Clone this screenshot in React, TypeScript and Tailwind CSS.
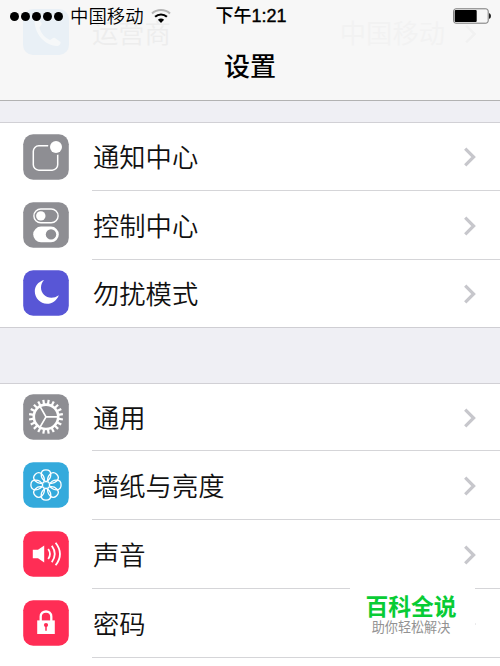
import type { ReactNode } from 'react';

const rotations = (count: number) => Array.from({ length: count }, (_, i) => (i * 360) / count);

function Tile({ color, children }: { color: string; children: ReactNode }) {
  return (
    <svg viewBox="0 0 46 46" className={`mb-[1px] h-[46px] w-[46px] shrink-0 ${color}`} fill="none">
      <rect x="0.2" y="0.2" width="45.6" height="45.6" rx="10" fill="currentColor" />
      {children}
    </svg>
  );
}

function NotificationIcon() {
  return (
    <Tile color="text-[#8e8e93]">
      <rect x="10.3" y="11.8" width="24.4" height="24.4" rx="5.5" stroke="#fff" strokeWidth="1.5" />
      <circle cx="33" cy="13" r="8" fill="currentColor" />
      <circle cx="33" cy="13" r="6" fill="#fff" />
    </Tile>
  );
}

function ControlIcon() {
  return (
    <Tile color="text-[#8e8e93]">
      <rect x="10.9" y="7" width="24.2" height="13.8" rx="6.9" stroke="#fff" strokeWidth="1.4" />
      <circle cx="17.8" cy="13.9" r="4.7" fill="#fff" />
      <rect x="10.2" y="24.6" width="25.6" height="15.6" rx="7.8" fill="#fff" />
      <circle cx="28" cy="32.4" r="5.2" fill="currentColor" />
    </Tile>
  );
}

function MoonIcon() {
  return (
    <Tile color="text-[#5856d6]">
      <path d="M21 10C14.8 12 11.8 16.2 11.8 21.3C11.8 28.2 17.3 33.8 24 33.8C29.4 33.8 33.8 30.5 35.8 25.2C33.4 26.9 31 27.7 28.4 27.7C22.5 27.7 18 23.3 18 17.8C18 14.8 19 12.2 21 10Z" fill="#fff" />
    </Tile>
  );
}

function GearIcon() {
  return (
    <Tile color="text-[#8e8e93]">
      <g stroke="#fff">
        <circle cx="23" cy="22.8" r="12.2" strokeWidth="2.6" />
        {rotations(20).map((a) => (
          <path key={a} d="M23 10.8V5.7" strokeWidth="2.2" transform={`rotate(${a + 9} 23 22.8)`} />
        ))}
        <path d="M23 22.8H35M23 22.8L17 12.4M23 22.8L17 33.2" strokeWidth="1.7" />
      </g>
    </Tile>
  );
}

function FlowerIcon() {
  return (
    <Tile color="text-[#34aadc]">
      <g stroke="#fff" strokeWidth="1.3">
        {rotations(8).map((a) => (
          <path
            key={a}
            d="M23 19.8C20.6 18.6 18.2 15.6 18.2 12.6C18.2 9.8 20.2 7.9 23 7.9C25.8 7.9 27.8 9.8 27.8 12.6C27.8 15.6 25.4 18.6 23 19.8Z"
            transform={`rotate(${a} 23 23)`}
          />
        ))}
      </g>
    </Tile>
  );
}

function SoundIcon() {
  return (
    <Tile color="text-[#ff2d55]">
      <path d="M9.8 18.7H15L21.2 14.4V31.5L15 27.3H9.8Z" fill="#fff" />
      <path d="M25.2 18C27.5 21.2 27.5 24.8 25.2 28M28.8 14.8C32.7 20.2 32.7 25.8 28.8 31.2M32.6 11.7C38.4 19.2 38.4 26.8 32.6 34.3" stroke="#fff" strokeWidth="1.8" />
    </Tile>
  );
}

function LockIcon() {
  return (
    <Tile color="text-[#ff2d55]">
      <path d="M17.7 21V16.5C17.7 9.8 28.3 9.8 28.3 16.5V21" stroke="#fff" strokeWidth="2.3" />
      <path d="M14.2 20.4H31.8V34H14.2Z" fill="#fff" />
      <circle cx="23" cy="25" r="2.1" fill="currentColor" />
      <path d="M23 25V30.8" stroke="currentColor" strokeWidth="1.5" />
    </Tile>
  );
}

function Chevron() {
  return (
    <svg viewBox="0 0 14 22" className="mt-px mr-[23px] ml-auto h-[22px] w-[14px] text-[#c7c7cc]" fill="none">
      <path d="M2.2 2.7L10.6 11L2.2 19.3" stroke="currentColor" strokeWidth="3.2" />
    </svg>
  );
}

function Row({ icon, label, height = 'h-[69px]', last = false }: { icon: ReactNode; label: string; height?: string; last?: boolean }) {
  return (
    <div className={`flex pl-[23px] ${height} ${last ? 'border-b border-[#cfced3]' : ''}`}>
      <div className="flex w-[69px] items-center">{icon}</div>
      <div className={`flex flex-1 items-center ${last ? '' : 'border-b border-[#d5d5d8]'}`}>
        <span className="pt-[3px] pl-px text-[26.3px] leading-[38px] font-[350] text-[#111]">{label}</span>
        <Chevron />
      </div>
    </div>
  );
}

function Header() {
  return (
    <header className="relative h-[101px] overflow-hidden border-b border-[#b2b2b2] bg-[#f7f7f7]">
      {/* Carrier row showing faintly through the translucent bar */}
      <div className="absolute top-[8px] left-[23px] flex w-[477px] items-center">
        <svg viewBox="0 0 46 46" className="h-[46px] w-[46px]" fill="none">
          <rect width="46" height="46" rx="10" fill="#e9f0f6" />
          <path d="M11.5 12C12 25 21 36 34 37C36 37 38 35 37.5 33L32 29C30 28 28.5 31 27 31C22 29 18 24 16.5 19C16.5 17 19.5 16 18.5 14L15 9C13.5 8 11.5 10 11.5 12Z" fill="#f6f8f9" />
        </svg>
        <span className="ml-[23px] pt-[5px] text-[26.3px] leading-[42px] font-[350] text-[#ededed]">运营商</span>
        <span className="ml-auto pt-[5px] text-[26.3px] leading-[42px] font-[350] text-[#f2f2f2]">中国移动</span>
        <svg viewBox="0 0 14 22" className="mt-[4px] mr-[22px] ml-[19px] h-[22px] w-[14px]" fill="none">
          <path d="M2.2 2.7L10.6 11L2.2 19.3" stroke="#f1f1f1" strokeWidth="2.5" />
        </svg>
      </div>
      <div className="relative grid h-[32px] grid-cols-3 items-center">
        <div className="flex items-center pl-[10px]">
          <div className="flex gap-[2px]">
            {rotations(5).map((a) => (
              <span key={a} className="h-[9px] w-[9px] rounded-full bg-black" />
            ))}
          </div>
          <span className="ml-[7px] pt-[2px] text-[18.4px] leading-[30px] font-[350] whitespace-nowrap text-black">中国移动</span>
          <svg viewBox="0 0 20 16" className="ml-[7px] h-[16px] w-[20px] shrink-0" fill="none">
            <path d="M1 5.5C6 .9 14 .9 19 5.5" stroke="#b5b5b5" strokeWidth="2.1" />
            <path d="M4.1 8.8C7.5 5.7 12.5 5.7 15.9 8.8" stroke="#000" strokeWidth="2.2" />
            <path d="M6.9 11.8C8.7 10.2 11.3 10.2 13.1 11.8L10 15Z" fill="#000" />
          </svg>
        </div>
        <div className="pt-px pl-[2px] text-center text-[18px] leading-[31px] font-medium text-black">
          下午<span className="[-webkit-text-stroke:0.4px_black]">1:21</span>
        </div>
        <svg viewBox="0 0 40 16" className="mr-[8px] h-[16px] w-[40px] justify-self-end" fill="none">
          <rect x="1.6" y="0.8" width="34.6" height="14.4" rx="2.3" stroke="#777" />
          <rect x="2.7" y="1.9" width="22" height="12.2" rx="1" fill="#000" />
          <path d="M37 5.2C39.6 5.4 39.6 10.6 37 10.8Z" fill="#222" />
        </svg>
      </div>
      <h1 className="relative pt-px text-center text-[26px] leading-[68px] font-medium text-black">设置</h1>
    </header>
  );
}

export default function App() {
  return (
    <div className="relative h-[666px] w-[500px] overflow-hidden bg-[#efeff4] font-['Liberation_Sans','Noto_Sans_CJK_SC',sans-serif]">
      <Header />
      <section className="mt-[21px] border-t border-[#d1d0d5] bg-white">
        <Row icon={<NotificationIcon />} label="通知中心" height="h-[68px]" />
        <Row icon={<ControlIcon />} label="控制中心" />
        <Row icon={<MoonIcon />} label="勿扰模式" height="h-[68px]" last />
      </section>
      <section className="mt-[55px] h-[283px] border-t border-[#d1d0d5] bg-white">
        <Row icon={<GearIcon />} label="通用" height="h-[67px]" />
        <Row icon={<FlowerIcon />} label="墙纸与亮度" />
        <Row icon={<SoundIcon />} label="声音" />
        <Row icon={<LockIcon />} label="密码" />
      </section>
      <div className="absolute top-[581px] left-[350px] flex h-[72px] w-[125px] flex-col items-center bg-white">
        <span className="mt-[9px] mr-[3px] text-[22.8px] leading-[34px] font-bold text-[#08cc35]">百科全说</span>
        <span className="-mt-[5px] mr-[3px] text-[13.1px] leading-[18px] text-[#929292]">助你轻松解决</span>
      </div>
    </div>
  );
}
